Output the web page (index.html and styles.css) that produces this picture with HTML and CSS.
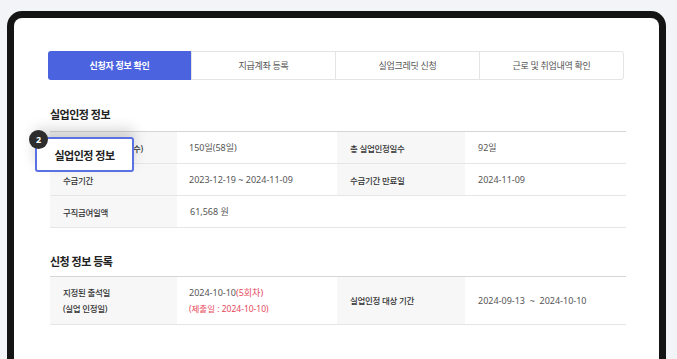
FILE: index.html
```html
<!DOCTYPE html>
<html lang="ko">
<head>
    <meta charset="UTF-8">
    <meta name="viewport" content="width=device-width, initial-scale=1.0">
    <title>실업인정 신청</title>
    <link rel="stylesheet" href="styles.css">
</head>
<body>

    <!-- Device frame -->
    <div class="device">
        <div class="screen">

            <!-- Step tabs -->
            <nav class="tabs">
                <a class="tab active">신청자 정보 확인</a>
                <a class="tab">지급계좌 등록</a>
                <a class="tab">실업크레딧 신청</a>
                <a class="tab">근로 및 취업내역 확인</a>
            </nav>

            <!-- 실업인정 정보 -->
            <h2 class="sec-title first">실업인정 정보</h2>
            <table class="info">
                <colgroup>
                    <col class="c-label"><col class="c-value"><col class="c-label2"><col>
                </colgroup>
                <tr>
                    <th>급여일수(실업인정일수)</th>
                    <td>150일(58일)</td>
                    <th>총 실업인정일수</th>
                    <td>92일</td>
                </tr>
                <tr>
                    <th>수급기간</th>
                    <td>2023-12-19 ~ 2024-11-09</td>
                    <th>수급기간 만료일</th>
                    <td>2024-11-09</td>
                </tr>
                <tr>
                    <th>구직급여일액</th>
                    <td colspan="3">61,568 원</td>
                </tr>
            </table>

            <!-- 신청 정보 등록 -->
            <h2 class="sec-title">신청 정보 등록</h2>
            <table class="info tall">
                <colgroup>
                    <col class="c-label"><col class="c-value"><col class="c-label2"><col>
                </colgroup>
                <tr>
                    <th>지정된 출석일<br>(실업 인정일)</th>
                    <td>2024-10-10<span class="red">(5회차)</span><br><span class="red small">(제출일 : 2024-10-10)</span></td>
                    <th>실업인정 대상 기간</th>
                    <td>2024-09-13 &nbsp;~&nbsp; 2024-10-10</td>
                </tr>
            </table>

            <!-- Guide tooltip -->
            <div class="guide">
                <span class="badge">2</span>
                실업인정 정보
            </div>

        </div>
    </div>

</body>
</html>
```

FILE: styles.css
```css
/* Global Styles */
* {
    margin: 0;
    padding: 0;
    box-sizing: border-box;
    font-family: "Noto Sans", "Noto Sans CJK KR", sans-serif;
}

body {
    background-color: #f3f4f8;
    color: #333;
    width: 677px;
    height: 359px;
    overflow: hidden;
}

/* Device frame */
.device {
    margin: 11px 0 0 7px;
    width: 659px;
    height: 360px;
    background: #141414;
    border-radius: 15px 15px 0 0;
    padding: 7px 7px 0 7px;
}

.screen {
    position: relative;
    background: #fff;
    height: 100%;
    border-radius: 8px 8px 0 0;
    padding: 33px 0 0 34px;
}

/* Tabs */
.tabs {
    display: flex;
    width: 576px;
    height: 29px;
    border: 1px solid #e4e4e4;
    border-radius: 3px;
}

.tab {
    flex: 1;
    display: flex;
    align-items: center;
    justify-content: center;
    font-size: 9px;
    letter-spacing: -0.3px;
    color: #555;
    border-left: 1px solid #e4e4e4;
}

.tab:first-child {
    border-left: none;
}

.tab.active {
    background: #4b63df;
    color: #fff;
    font-weight: 700;
    margin: -1px 0 -1px -1px;
    border-radius: 3px 0 0 3px;
}

/* Section titles */
.sec-title {
    font-size: 11px;
    font-weight: 700;
    letter-spacing: -0.5px;
    color: #222;
    line-height: 16px;
    margin: 27px 0 8px 2px;
}

.sec-title:not(.first) {
    margin-top: 26px;
    margin-bottom: 6px;
}

/* Info tables */
.info {
    margin-left: 2px;
    width: 576px;
    border-collapse: collapse;
    table-layout: fixed;
    border-top: 1px solid #d6d6d6;
}

.c-label { width: 127px; }
.c-value { width: 160px; }
.c-label2 { width: 128px; }

.info tr {
    height: 32px;
    border-bottom: 1px solid #e6e6e6;
}

.info th,
.info td {
    text-align: left;
    vertical-align: middle;
    white-space: nowrap;
}

.info th {
    background: #f7f7f7;
    font-size: 8.5px;
    letter-spacing: -0.3px;
    font-weight: 500;
    color: #333;
    padding-left: 13px;
}

.info td {
    font-size: 9px;
    color: #555;
    padding-left: 12px;
}

.info td:last-child {
    padding-left: 13px;
}

.info.tall tr {
    height: 48px;
}

.info.tall th,
.info.tall td {
    line-height: 16px;
}

.red {
    color: #e6485c;
}

.small {
    font-size: 8.5px;
}

/* Guide tooltip */
.guide {
    position: absolute;
    left: 21px;
    top: 119px;
    width: 99px;
    height: 35px;
    background: #fff;
    border: 2px solid #5b70e2;
    border-radius: 3px;
    box-shadow: 0 -8px 14px rgba(0, 0, 0, 0.16);
    display: flex;
    align-items: center;
    justify-content: center;
    font-size: 11px;
    font-weight: 700;
    letter-spacing: -0.5px;
    color: #222;
}

.badge {
    position: absolute;
    left: -8px;
    top: -9px;
    width: 19px;
    height: 19px;
    border-radius: 50%;
    background: #2d2d2d;
    color: #fff;
    font-size: 9px;
    font-weight: 700;
    display: flex;
    align-items: center;
    justify-content: center;
    letter-spacing: 0;
}
```
